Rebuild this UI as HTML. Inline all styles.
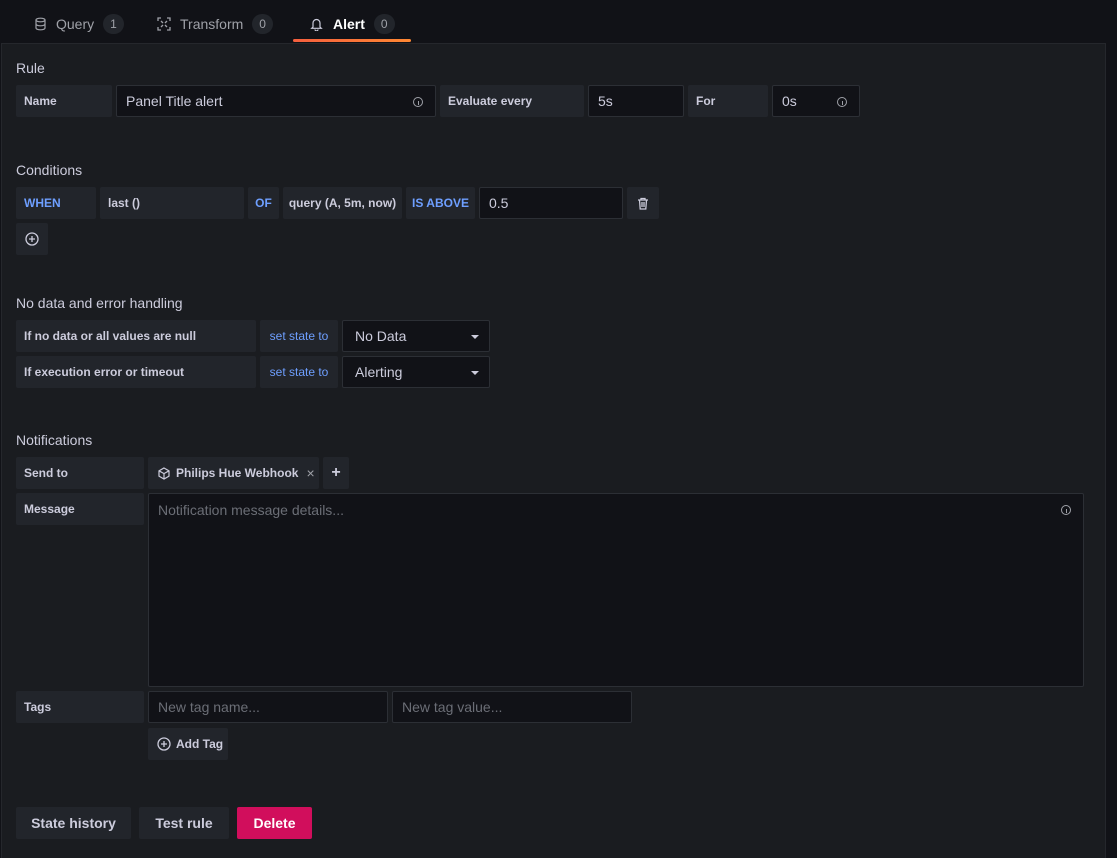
<!DOCTYPE html>
<html><head><meta charset="utf-8"><style>
*{box-sizing:border-box;margin:0;padding:0}
body{width:1117px;height:858px;background:#111217;font-family:"Liberation Sans",sans-serif;color:#ccccdc;position:relative;overflow:hidden}
.a{position:absolute}
.panel{left:1px;top:43px;width:1105px;height:815px;background:#1a1c20;border:1px solid #25272c;border-bottom:none}
.lbl{background:#22252b;font-size:12px;font-weight:bold;color:#ccccdc;display:flex;align-items:center;padding-left:8px;border-radius:2px;height:32px}
.blue{color:#6e9fff;justify-content:center;padding:0}
.inp{background:#111217;border:1px solid #2c2f35;border-radius:2px;font-size:14px;color:#ccccdc;display:flex;align-items:center;padding-left:9px;height:32px}
.ph{color:#6b6e76}
.h{font-size:14px;color:#ccccdc}
.tab{font-size:14px;color:#9fa1a8;display:flex;align-items:center;top:13px;height:22px}
.badge{background:#22252b;border-radius:10px;font-size:12px;padding:0 7px;height:20px;line-height:20px;margin-left:9px;color:#9fa1a8}
.btn{background:#22252b;border-radius:2px;font-size:14px;font-weight:bold;color:#ccccdc;display:flex;align-items:center;justify-content:center;height:32px}
.info{position:absolute;right:12px;top:11px;width:10px;height:10px;border:1px solid #9fa1a8;border-radius:50%}
.info:after{content:"";position:absolute;left:3.5px;top:3px;width:1px;height:4px;background:#9fa1a8}
.caret{position:absolute;right:10px;top:14px;border-left:4px solid transparent;border-right:4px solid transparent;border-top:4px solid #ccccdc}
</style></head><body>
<div class="a tab" style="left:34px"><svg width="13" height="14" viewBox="0 0 13 14" fill="none" stroke="#9fa1a8" stroke-width="1.2"><ellipse cx="6.5" cy="3" rx="4.5" ry="1.8"/><path d="M2 3v8c0 1 2 1.8 4.5 1.8S11 12 11 11V3M2 7c0 1 2 1.8 4.5 1.8S11 8 11 7"/></svg><span style="margin-left:9px">Query</span><span class="badge">1</span></div>
<div class="a tab" style="left:157px"><svg width="14" height="14" viewBox="0 0 14 14" fill="none" stroke="#9fa1a8" stroke-width="1.3"><path d="M1 4V1h3M10 1h3v3M13 10v3h-3M4 13H1v-3M4 4l2 2M10 4L8 6M10 10L8 8M4 10l2-2"/></svg><span style="margin-left:9px">Transform</span><span class="badge">0</span></div>
<div class="a tab" style="left:310px;color:#fff;font-weight:bold"><svg width="13" height="14" viewBox="0 0 13 14" fill="none" stroke="#ccccdc" stroke-width="1.2"><path d="M3 10V6a3.5 3.5 0 017 0v4l1.3 1.3H1.7zM5 12.5a1.5 1.5 0 003 0"/></svg><span style="margin-left:10px">Alert</span><span class="badge" style="font-weight:normal">0</span></div>
<div class="a" style="left:293px;top:39px;width:118px;height:3px;background:linear-gradient(90deg,#f55f3e,#ff8833);border-radius:2px"></div>
<div class="a panel"></div>

<div class="a h" style="left:16px;top:60px">Rule</div>
<div class="a lbl" style="left:16px;top:85px;width:96px">Name</div>
<div class="a inp" style="left:116px;top:85px;width:320px">Panel Title alert<span class="info"></span></div>
<div class="a lbl" style="left:440px;top:85px;width:144px">Evaluate every</div>
<div class="a inp" style="left:588px;top:85px;width:96px">5s</div>
<div class="a lbl" style="left:688px;top:85px;width:80px">For</div>
<div class="a inp" style="left:772px;top:85px;width:88px">0s<span class="info"></span></div>

<div class="a h" style="left:16px;top:162px">Conditions</div>
<div class="a lbl" style="left:16px;top:187px;width:80px;color:#6e9fff">WHEN</div>
<div class="a lbl" style="left:100px;top:187px;width:144px">last ()</div>
<div class="a lbl blue" style="left:248px;top:187px;width:31px">OF</div>
<div class="a lbl blue" style="left:283px;top:187px;width:119px;color:#ccccdc">query (A, 5m, now)</div>
<div class="a lbl blue" style="left:406px;top:187px;width:69px">IS ABOVE</div>
<div class="a inp" style="left:479px;top:187px;width:144px">0.5</div>
<div class="a lbl blue" style="left:627px;top:187px;width:32px"><svg width="12" height="13" viewBox="0 0 12 13" fill="none" stroke="#ccccdc" stroke-width="1.3"><path d="M1 3h10M4 3V1.5h4V3M2.5 3l.7 9h5.6l.7-9M5 5v5M7 5v5"/></svg></div>
<div class="a lbl blue" style="left:16px;top:223px;width:32px"><svg width="14" height="14" viewBox="0 0 14 14" fill="none" stroke="#ccccdc" stroke-width="1.3"><circle cx="7" cy="7" r="6"/><path d="M7 4v6M4 7h6"/></svg></div>

<div class="a h" style="left:16px;top:295px">No data and error handling</div>
<div class="a lbl" style="left:16px;top:320px;width:240px">If no data or all values are null</div>
<div class="a lbl blue" style="left:260px;top:320px;width:78px;font-weight:normal">set state to</div>
<div class="a inp" style="left:342px;top:320px;width:148px;padding-left:12px">No Data<span class="caret"></span></div>
<div class="a lbl" style="left:16px;top:356px;width:240px">If execution error or timeout</div>
<div class="a lbl blue" style="left:260px;top:356px;width:78px;font-weight:normal">set state to</div>
<div class="a inp" style="left:342px;top:356px;width:148px;padding-left:12px">Alerting<span class="caret"></span></div>

<div class="a h" style="left:16px;top:432px">Notifications</div>
<div class="a lbl" style="left:16px;top:457px;width:128px">Send to</div>
<div class="a lbl" style="left:148px;top:457px;width:171px;padding-left:10px"><svg width="12" height="13" viewBox="0 0 12 13" fill="none" stroke="#ccccdc" stroke-width="1.2"><path d="M6 1l5 2.8v5.4L6 12 1 9.2V3.8zM1 3.8L6 6.6l5-2.8M6 6.6V12"/></svg><span style="margin-left:6px">Philips Hue Webhook</span><span style="margin-left:8px;font-weight:normal;color:#9fa1a8;font-size:14px">×</span></div>
<div class="a lbl blue" style="left:323px;top:457px;width:26px;color:#ccccdc;font-size:16px">+</div>
<div class="a lbl" style="left:16px;top:493px;width:128px">Message</div>
<div class="a inp" style="left:148px;top:493px;width:936px;height:194px;align-items:flex-start;padding-top:8px"><span class="ph">Notification message details...</span><span class="info"></span></div>
<div class="a lbl" style="left:16px;top:691px;width:128px">Tags</div>
<div class="a inp" style="left:148px;top:691px;width:240px"><span class="ph">New tag name...</span></div>
<div class="a inp" style="left:392px;top:691px;width:240px"><span class="ph">New tag value...</span></div>
<div class="a lbl" style="left:148px;top:728px;width:80px;padding-left:9px"><svg width="14" height="14" viewBox="0 0 14 14" fill="none" stroke="#ccccdc" stroke-width="1.3"><circle cx="7" cy="7" r="6"/><path d="M7 4v6M4 7h6"/></svg><span style="margin-left:5px">Add Tag</span></div>

<div class="a btn" style="left:16px;top:807px;width:115px">State history</div>
<div class="a btn" style="left:139px;top:807px;width:90px">Test rule</div>
<div class="a btn" style="left:237px;top:807px;width:75px;background:#d10e5c;color:#fff">Delete</div>
</body></html>
